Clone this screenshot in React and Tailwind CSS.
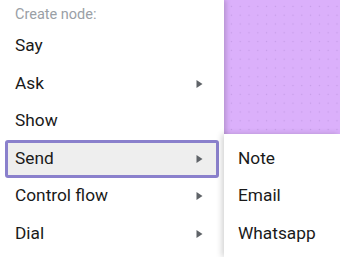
import { useState } from "react";

const items = [
    { label: "Say" },
    { label: "Ask", sub: true },
    { label: "Show" },
    { label: "Send", sub: true, active: true },
    { label: "Control flow", sub: true },
    { label: "Dial", sub: true },
];

const subItems = ["Note", "Email", "Whatsapp"];

const Caret = () => (
    <svg width="7" height="10" viewBox="0 0 7 10" className="shrink-0">
        <path d="M0.5 1 L6.5 5 L0.5 9 Z" fill="#5f6368" />
    </svg>
);

export default function App() {
    const [hover] = useState("Send");

    return (
        <div
            className="flex h-[257px] w-[340px] overflow-hidden bg-white text-[#1a1a1a]"
            style={{ fontFamily: "Roboto, 'Liberation Sans', sans-serif" }}
        >
            {/* Main menu */}
            <div className="relative z-10 flex w-[224px] shrink-0 flex-col bg-white shadow-[2px_0_5px_rgba(0,0,0,0.18)]">
                <div className="flex h-[27.5px] items-end pl-[15px] pb-[2px] text-[14.5px] text-[#9aa0a6]">Create node:</div>
                <ul className="flex flex-col px-[5px]">
                    {items.map((it) => (
                        <li
                            key={it.label}
                            className={
                                it.label === hover
                                    ? "flex h-[37.5px] items-center justify-between rounded-[3px] border-[3px] border-[#8a80cc] bg-[#eeeeee] pl-[7px] pr-[13px] text-[17.3px]"
                                    : "flex h-[37.5px] items-center justify-between pl-[10px] pr-[16px] text-[17.3px]"
                            }
                        >
                            <span>{it.label}</span>
                            {it.sub && <Caret />}
                        </li>
                    ))}
                </ul>
            </div>

            {/* Canvas + submenu */}
            <div className="flex flex-1 flex-col">
                <div
                    className="h-[134px] bg-[#dbb0fb]"
                    style={{
                        backgroundImage: "radial-gradient(circle, #c49be6 0.8px, transparent 1px)",
                        backgroundSize: "8.8px 8.8px",
                        backgroundPosition: "3px 2px",
                    }}
                />
                <ul className="relative z-20 flex flex-1 flex-col bg-white pt-[6px] shadow-[-2px_0_6px_rgba(0,0,0,0.18)]">
                    {subItems.map((s) => (
                        <li key={s} className="flex h-[37.5px] items-center pl-[14px] text-[17.3px]">
                            {s}
                        </li>
                    ))}
                </ul>
            </div>
        </div>
    );
}
